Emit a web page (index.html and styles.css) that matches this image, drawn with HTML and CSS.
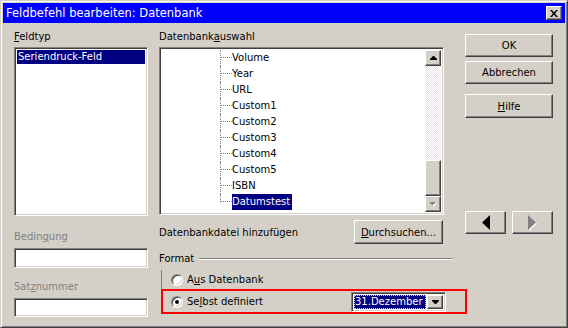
FILE: index.html
```html
<!DOCTYPE html>
<html lang="de">
  <head>
    <meta charset="UTF-8" />
    <title>Feldbefehl bearbeiten: Datenbank</title>
    <link rel="stylesheet" href="styles.css">
  </head>
  <body>
    <div class="dialog">
      <div class="titlebar">
        <span class="title">Feldbefehl bearbeiten: Datenbank</span>
        <span class="close-btn">
          <svg width="8" height="7" viewBox="0 0 8 7"><path d="M0 0h2l2 2.4L6 0h2L5 3.5 8 7H6L4 4.6 2 7H0l3-3.5z" /></svg>
        </span>
      </div>

      <div class="content">
        <div class="col-left">
          <div class="label"><u>F</u>eldtyp</div>
          <div class="sunken type-list">
            <div class="list-item selected">Seriendruck-Feld</div>
          </div>
          <div class="label disabled cond-label">Bedin<u>g</u>ung</div>
          <div class="sunken field cond-field"></div>
          <div class="label disabled rec-label">Sat<u>z</u>nummer</div>
          <div class="sunken field rec-field"></div>
        </div>

        <div class="col-mid">
          <div class="label">Datenbank<u>a</u>uswahl</div>
          <div class="sunken tree">
            <div class="tree-items">
              <div class="node"><span class="branch"></span><span class="node-text">Volume</span></div>
              <div class="node"><span class="branch"></span><span class="node-text">Year</span></div>
              <div class="node"><span class="branch"></span><span class="node-text">URL</span></div>
              <div class="node"><span class="branch"></span><span class="node-text">Custom1</span></div>
              <div class="node"><span class="branch"></span><span class="node-text">Custom2</span></div>
              <div class="node"><span class="branch"></span><span class="node-text">Custom3</span></div>
              <div class="node"><span class="branch"></span><span class="node-text">Custom4</span></div>
              <div class="node"><span class="branch"></span><span class="node-text">Custom5</span></div>
              <div class="node"><span class="branch"></span><span class="node-text">ISBN</span></div>
              <div class="node last"><span class="branch"></span><span class="node-text selected">Datumstest</span></div>
            </div>
            <div class="scrollbar">
              <div class="raised sb-btn">
                <svg width="7" height="4" viewBox="0 0 7 4"><path d="M3 0h1l3 3v1H0V3z" /></svg>
              </div>
              <div class="sb-track"></div>
              <div class="raised sb-thumb"></div>
              <div class="raised sb-btn">
                <svg width="8" height="5" viewBox="0 0 8 5"><path d="M1 1h7L4.5 4.5z" fill="#fff" /><path d="M0 0h7L3.5 3.5z" fill="#808080" /></svg>
              </div>
            </div>
          </div>

          <div class="file-row">
            <span>Datenbankdatei hinzufügen</span>
            <div class="raised btn browse-btn"><u>D</u>urchsuchen...</div>
          </div>

          <div class="format-head">
            <span>Format</span>
            <span class="format-line"></span>
          </div>

          <div class="radio-group">
            <div class="radio-row">
              <span class="radio"></span>
              <span>A<u>u</u>s Datenbank</span>
            </div>
            <div class="radio-row marked">
              <span class="radio checked"></span>
              <span>Se<u>l</u>bst definiert</span>
              <div class="sunken combo">
                <div class="combo-value"><span>31.Dezember</span></div>
                <div class="raised combo-btn">
                  <svg width="7" height="4" viewBox="0 0 7 4"><path d="M0 0h7v1L4 4H3L0 1z" /></svg>
                </div>
              </div>
            </div>
          </div>
        </div>

        <div class="col-right">
          <div class="raised btn ok-btn">OK</div>
          <div class="raised btn cancel-btn">Abbrechen</div>
          <div class="raised btn help-btn"><u>H</u>ilfe</div>
          <div class="nav-row">
            <div class="raised btn nav-btn">
              <svg width="8" height="15" viewBox="0 0 8 15"><path d="M0 7.5L8 0v15z" /></svg>
            </div>
            <div class="raised btn nav-btn">
              <svg width="9" height="16" viewBox="0 0 9 16"><path d="M1 1l8 7.5-8 7.5z" fill="#fff" /><path d="M0 0l8 7.5L0 15z" fill="#808080" /></svg>
            </div>
          </div>
        </div>
      </div>
    </div>
  </body>
</html>
```

FILE: styles.css
```css
* {
  box-sizing: border-box;
}
body {
  margin: 0;
  background: #d4d0c8;
}
.dialog {
  width: 568px;
  height: 328px;
  padding: 2px;
  background: #d4d0c8;
  border: 1px solid;
  border-color: #d4d0c8 #404040 #404040 #d4d0c8;
  box-shadow: inset 1px 1px #fff, inset -1px -1px #808080;
  font-family: "DejaVu Sans", sans-serif;
  font-size: 10px;
  color: #000;
}
u {
  text-decoration: underline;
  text-underline-offset: 1px;
}

/* title bar */
.titlebar {
  display: flex;
  align-items: center;
  justify-content: space-between;
  height: 20px;
  padding: 0 3px 0 3px;
  background: #0000ff;
  color: #fff;
  font-size: 11.5px;
}
.close-btn {
  display: flex;
  align-items: center;
  justify-content: center;
  width: 16px;
  height: 14px;
  background: #d4d0c8;
  border: 1px solid;
  border-color: #fff #404040 #404040 #fff;
  box-shadow: inset -1px -1px #808080;
}

/* shared 3d looks */
.sunken {
  background: #fff;
  border: 1px solid;
  border-color: #808080 #fff #fff #808080;
  box-shadow: inset 1px 1px #404040, inset -1px -1px #d4d0c8;
}
.raised {
  background: #d4d0c8;
  border: 1px solid;
  border-color: #fff #404040 #404040 #fff;
  box-shadow: inset -1px -1px #808080;
}
.btn {
  display: flex;
  align-items: center;
  justify-content: center;
}

.content {
  display: flex;
  padding: 7px 0 0 11px;
}
.label {
  height: 13px;
  line-height: 13px;
  white-space: nowrap;
}
.disabled {
  color: #808080;
}

/* left column */
.col-left {
  width: 134px;
  display: flex;
  flex-direction: column;
}
.type-list {
  margin-top: 4px;
  height: 169px;
  padding: 2px;
}
.list-item {
  height: 14px;
  line-height: 14px;
  padding-left: 1px;
}
.selected {
  background: #000080;
  color: #fff;
}
.cond-label {
  margin-top: 14px;
}
.rec-label {
  margin-top: 12px;
}
.field {
  margin-top: 5px;
  height: 20px;
}
.rec-field {
  height: 19px;
}

/* middle column */
.col-mid {
  width: 294px;
  margin-left: 11px;
}
.tree {
  display: flex;
  width: 285px;
  height: 168px;
  margin-top: 4px;
  padding: 2px;
}
.tree-items {
  flex: 1;
}
.node {
  display: flex;
  height: 16px;
  margin-left: 58px;
  border-left: 1px dotted #808080;
}
.node.last {
  border-left: none;
}
.branch {
  width: 11px;
  height: 8px;
  border-bottom: 1px dotted #808080;
}
.node.last .branch {
  border-left: 1px dotted #808080;
  width: 12px;
}
.node-text {
  height: 16px;
  line-height: 16px;
  padding-right: 2px;
}
.scrollbar {
  width: 16px;
  display: flex;
  flex-direction: column;
}
.sb-btn {
  display: flex;
  align-items: center;
  justify-content: center;
  height: 16px;
}
.sb-track {
  flex: 1;
  background: repeating-conic-gradient(#fff 0 25%, #e8e4ea 0 50%) 0 0 / 2px 2px;
}
.sb-thumb {
  height: 36px;
}

.file-row {
  display: flex;
  align-items: center;
  justify-content: space-between;
  width: 284px;
  margin-top: 5px;
}
.browse-btn {
  width: 89px;
  height: 24px;
}

.format-head {
  display: flex;
  align-items: center;
  height: 13px;
  margin-top: 8px;
}
.format-line {
  flex: 1;
  margin-left: 5px;
  border-top: 1px solid #808080;
  border-bottom: 1px solid #fff;
}

.radio-group {
  margin: 5px 0 0 2px;
  border-left: 1px solid #808080;
}
.radio-row {
  display: flex;
  align-items: center;
  gap: 4px;
  height: 19px;
  padding-left: 9px;
}
.radio-row.marked {
  width: 306px;
  height: 25px;
  margin-left: -1px;
  padding-left: 8px;
  border: 2px solid #ff0000;
}
.radio {
  width: 12px;
  height: 12px;
  border-radius: 50%;
  background: #fff;
  border: 1px solid;
  border-color: #808080 #fff #fff #808080;
  box-shadow: inset 1px 1px #404040, inset -1px -1px #d4d0c8;
  display: flex;
  align-items: center;
  justify-content: center;
}
.radio.checked::after {
  content: "";
  width: 4px;
  height: 4px;
  border-radius: 50%;
  background: #000;
}
.combo {
  display: flex;
  width: 95px;
  height: 20px;
  margin: 0 19px 0 auto;
  padding: 2px;
}
.combo-value {
  flex: 1;
  padding-right: 1px;
}
.combo-value span {
  display: block;
  height: 100%;
  line-height: 14px;
  padding-left: 1px;
  background: #000080;
  color: #fff;
  outline: 1px dotted #d4d0c8;
  outline-offset: -1px;
  white-space: nowrap;
  overflow: hidden;
}
.combo-btn {
  width: 16px;
  display: flex;
  align-items: center;
  justify-content: center;
}

/* right column */
.col-right {
  width: 88px;
  margin-left: 12px;
  display: flex;
  flex-direction: column;
}
.ok-btn {
  margin-top: 4px;
  height: 23px;
}
.cancel-btn {
  margin-top: 4px;
  height: 23px;
}
.help-btn {
  margin-top: 10px;
  height: 24px;
}
.nav-row {
  display: flex;
  gap: 6px;
  margin-top: 93px;
}
.nav-btn {
  width: 41px;
  height: 23px;
}
```
